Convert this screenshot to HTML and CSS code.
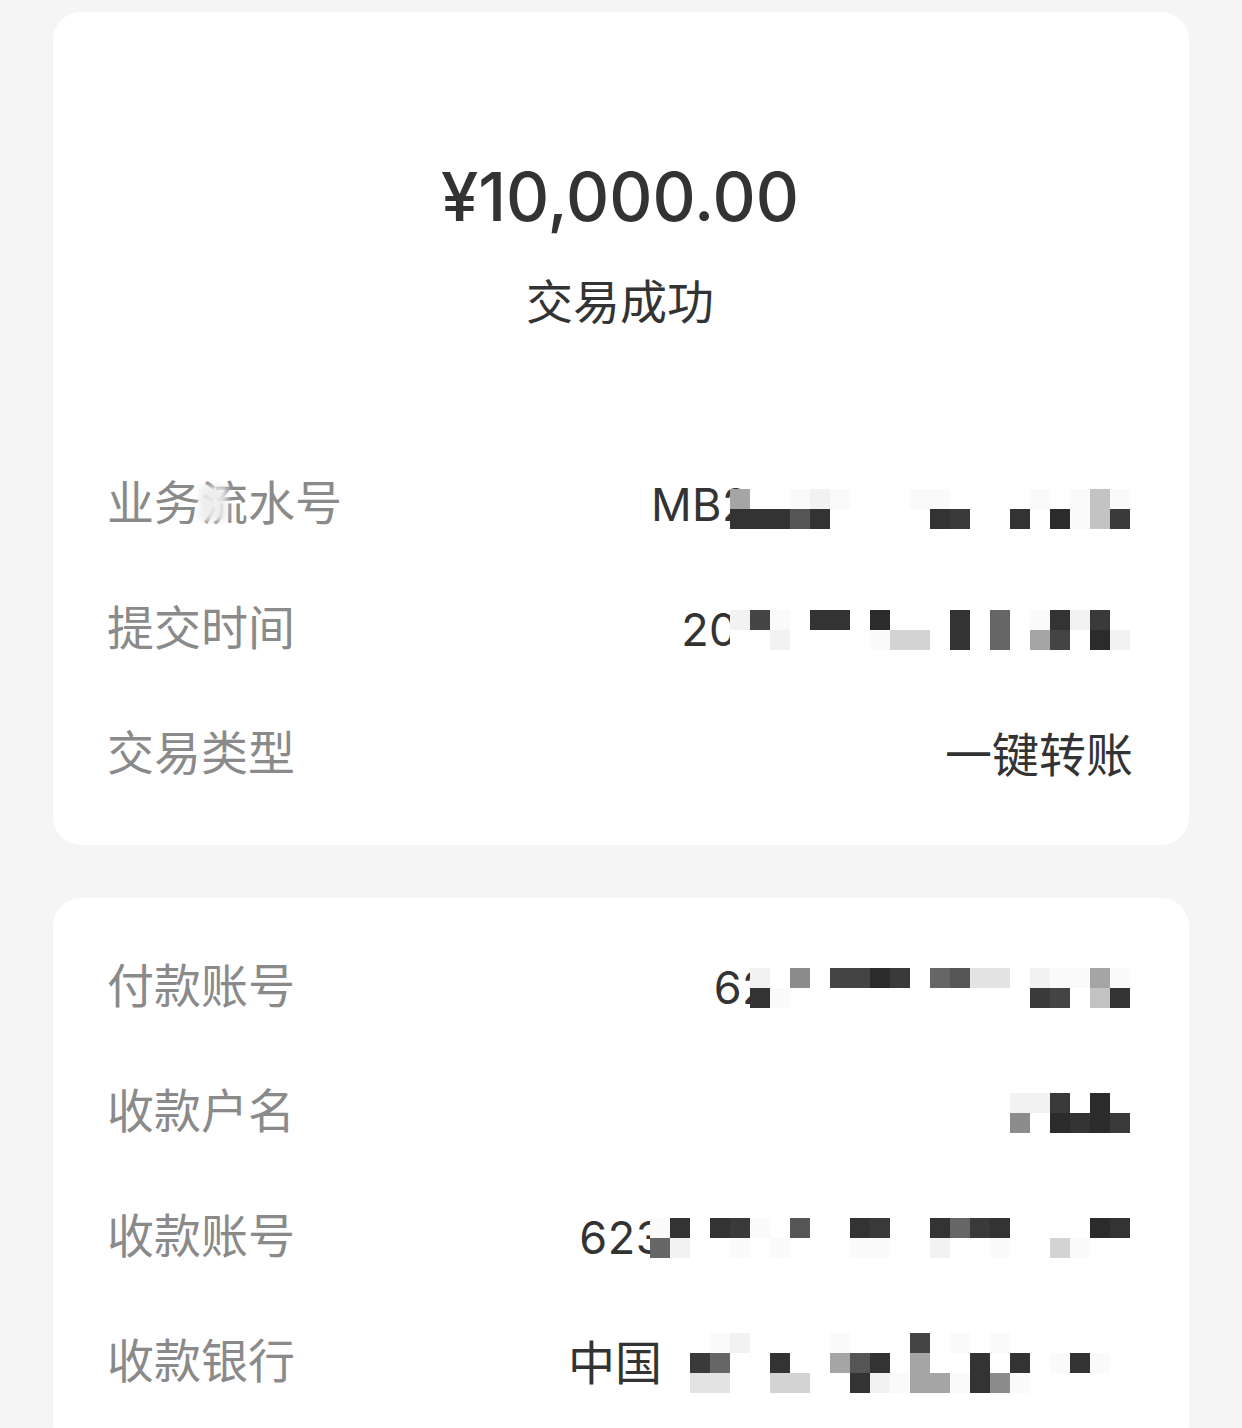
FILE: index.html
```html
<!DOCTYPE html>
<html>
  <head>
    <title>交易详情</title>
    <meta name="viewport" content="width=device-width, initial-scale=1.0">
    <link rel="stylesheet" href="styles.css">
  </head>
  <body>
    <div class="page">
      <section class="card">
        <div class="summary">
          <div class="amount">¥10,000.00</div>
          <div class="status">交易成功</div>
        </div>

        <div class="row">
          <span class="label">业务<span class="smudge">流</span>水号</span>
          <span class="value">
            <span class="digits">MB2</span>
            <span class="mosaic m-serial">
              <span class="m-row"><i class="s6"></i><i></i><i></i><i class="s1"></i><i class="s2"></i><i class="s1"></i><i></i><i></i><i></i><i class="s1"></i><i class="s1"></i><i></i><i></i><i></i><i></i><i class="s1"></i><i></i><i class="s1"></i><i class="s5"></i><i class="s1"></i></span>
              <span class="m-row"><i class="s12"></i><i class="s12"></i><i class="s12"></i><i class="s9"></i><i class="s12"></i><i></i><i></i><i></i><i></i><i></i><i class="s12"></i><i class="s11"></i><i></i><i></i><i class="s12"></i><i></i><i class="s13"></i><i class="s1"></i><i class="s5"></i><i class="s11"></i></span>
            </span>
          </span>
        </div>

        <div class="row">
          <span class="label">提交时间</span>
          <span class="value">
            <span class="digits">20</span>
            <span class="mosaic m-time">
              <span class="m-row"><i class="s2"></i><i class="s10"></i><i class="s1"></i><i></i><i class="s12"></i><i class="s12"></i><i></i><i class="s13"></i><i></i><i></i><i></i><i class="s12"></i><i></i><i class="s8"></i><i></i><i class="s1"></i><i class="s12"></i><i class="s2"></i><i class="s11"></i><i></i></span>
              <span class="m-row"><i></i><i></i><i class="s2"></i><i></i><i></i><i></i><i></i><i class="s1"></i><i class="s4"></i><i class="s4"></i><i></i><i class="s12"></i><i></i><i class="s8"></i><i></i><i class="s6"></i><i class="s10"></i><i></i><i class="s13"></i><i class="s2"></i></span>
            </span>
          </span>
        </div>

        <div class="row">
          <span class="label">交易类型</span>
          <span class="value">一键转账</span>
        </div>
      </section>

      <section class="card">
        <div class="row">
          <span class="label">付款账号</span>
          <span class="value">
            <span class="digits">62</span>
            <span class="mosaic m-payer">
              <span class="m-row"><i class="s2"></i><i></i><i class="s7"></i><i></i><i class="s10"></i><i class="s10"></i><i class="s13"></i><i class="s11"></i><i></i><i class="s8"></i><i class="s9"></i><i class="s3"></i><i class="s3"></i><i></i><i class="s2"></i><i class="s1"></i><i class="s1"></i><i class="s6"></i><i class="s1"></i></span>
              <span class="m-row"><i class="s12"></i><i class="s1"></i><i></i><i></i><i></i><i></i><i></i><i></i><i></i><i></i><i></i><i></i><i></i><i></i><i class="s11"></i><i class="s10"></i><i></i><i class="s5"></i><i class="s12"></i></span>
            </span>
          </span>
        </div>

        <div class="row">
          <span class="label">收款户名</span>
          <span class="value">
            <span class="mosaic">
              <span class="m-row"><i class="s2"></i><i class="s2"></i><i class="s11"></i><i></i><i class="s13"></i><i></i></span>
              <span class="m-row"><i class="s7"></i><i></i><i class="s13"></i><i class="s12"></i><i class="s13"></i><i class="s11"></i></span>
            </span>
          </span>
        </div>

        <div class="row">
          <span class="label">收款账号</span>
          <span class="value">
            <span class="digits">623</span>
            <span class="mosaic m-payee">
              <span class="m-row"><i class="s1"></i><i class="s12"></i><i></i><i class="s12"></i><i class="s11"></i><i class="s1"></i><i></i><i class="s9"></i><i></i><i></i><i class="s12"></i><i class="s11"></i><i></i><i></i><i class="s12"></i><i class="s8"></i><i class="s11"></i><i class="s12"></i><i></i><i></i><i></i><i></i><i class="s13"></i><i class="s12"></i></span>
              <span class="m-row"><i class="s8"></i><i class="s2"></i><i></i><i></i><i class="s1"></i><i></i><i class="s1"></i><i></i><i></i><i></i><i class="s1"></i><i class="s1"></i><i></i><i></i><i class="s2"></i><i></i><i></i><i class="s1"></i><i></i><i></i><i class="s4"></i><i class="s1"></i><i></i><i></i></span>
            </span>
          </span>
        </div>

        <div class="row">
          <span class="label">收款银行</span>
          <span class="value">
            <span class="bank-name">中国</span>
            <span class="mosaic m-bank">
              <span class="m-row"><i></i><i class="s1"></i><i class="s2"></i><i></i><i></i><i></i><i></i><i class="s1"></i><i></i><i></i><i></i><i class="s10"></i><i></i><i class="s1"></i><i></i><i class="s1"></i><i></i><i></i><i></i><i></i><i></i></span>
              <span class="m-row"><i class="s11"></i><i class="s8"></i><i></i><i></i><i class="s12"></i><i></i><i></i><i class="s6"></i><i class="s9"></i><i class="s12"></i><i></i><i class="s6"></i><i></i><i></i><i class="s12"></i><i></i><i class="s12"></i><i></i><i class="s1"></i><i class="s12"></i><i class="s1"></i></span>
              <span class="m-row"><i class="s3"></i><i class="s3"></i><i></i><i></i><i class="s4"></i><i class="s4"></i><i></i><i></i><i class="s12"></i><i class="s2"></i><i class="s1"></i><i class="s6"></i><i class="s6"></i><i class="s1"></i><i class="s12"></i><i class="s7"></i><i class="s1"></i><i></i><i></i><i></i><i></i></span>
            </span>
          </span>
        </div>
      </section>
    </div>
  </body>
</html>
```

FILE: styles.css
```css
body {
  margin: 0;
  padding: 0;
  background-color: #f5f5f5;
  font-family: Inter, "Noto Sans CJK SC", sans-serif;
  color: #333;
}
.page {
  padding: 12px 53px 0;
}
.card {
  background-color: #fff;
  border-radius: 28px;
  padding: 27px 56px 28px 54px;
  margin-bottom: 53px;
}
.summary {
  padding: 113px 0 110px;
  text-align: center;
}
.amount {
  font-size: 67px;
  line-height: 90px;
  font-weight: 500;
  color: #333;
}
.status {
  margin-top: 30px;
  font-size: 47px;
  line-height: 60px;
  color: #333;
}
.row {
  display: flex;
  justify-content: space-between;
  align-items: center;
  height: 125px;
}
.label {
  font-size: 47px;
  line-height: 60px;
  margin-top: -4px;
  color: #8a8a8a;
}
.smudge {
  position: relative;
}
.smudge::after {
  content: "";
  position: absolute;
  left: -2px;
  top: 22%;
  width: 60%;
  height: 62%;
  background: rgba(236, 236, 236, 0.9);
  filter: blur(3px);
}
.value {
  display: flex;
  align-items: center;
  font-size: 47px;
  line-height: 60px;
  color: #333;
}
.digits {
  font-size: 45px;
  letter-spacing: 0.5px;
}

/* pixelated cover over private numbers */
.mosaic {
  position: relative;
  display: flex;
  flex-direction: column;
  margin-right: 3px;
  background: #fff;
}
.m-row {
  display: flex;
}
.m-row i {
  display: block;
  width: 20px;
  height: 20px;
}
.m-serial { margin-left: -20px; margin-top: 8px; }
.m-time { margin-left: -8px; }
.m-payer { margin-left: -20px; }
.m-payee { margin-left: -14px; }
.m-bank { margin-left: 28px; margin-right: 23px; }

.s1 { background: #fafafa; }
.s2 { background: #f2f2f2; }
.s3 { background: #e3e3e3; }
.s4 { background: #d3d3d3; }
.s5 { background: #c3c3c3; }
.s6 { background: #a5a5a5; }
.s7 { background: #8c8c8c; }
.s8 { background: #666; }
.s9 { background: #555; }
.s10 { background: #444; }
.s11 { background: #3a3a3a; }
.s12 { background: #333; }
.s13 { background: #2b2b2b; }
```
